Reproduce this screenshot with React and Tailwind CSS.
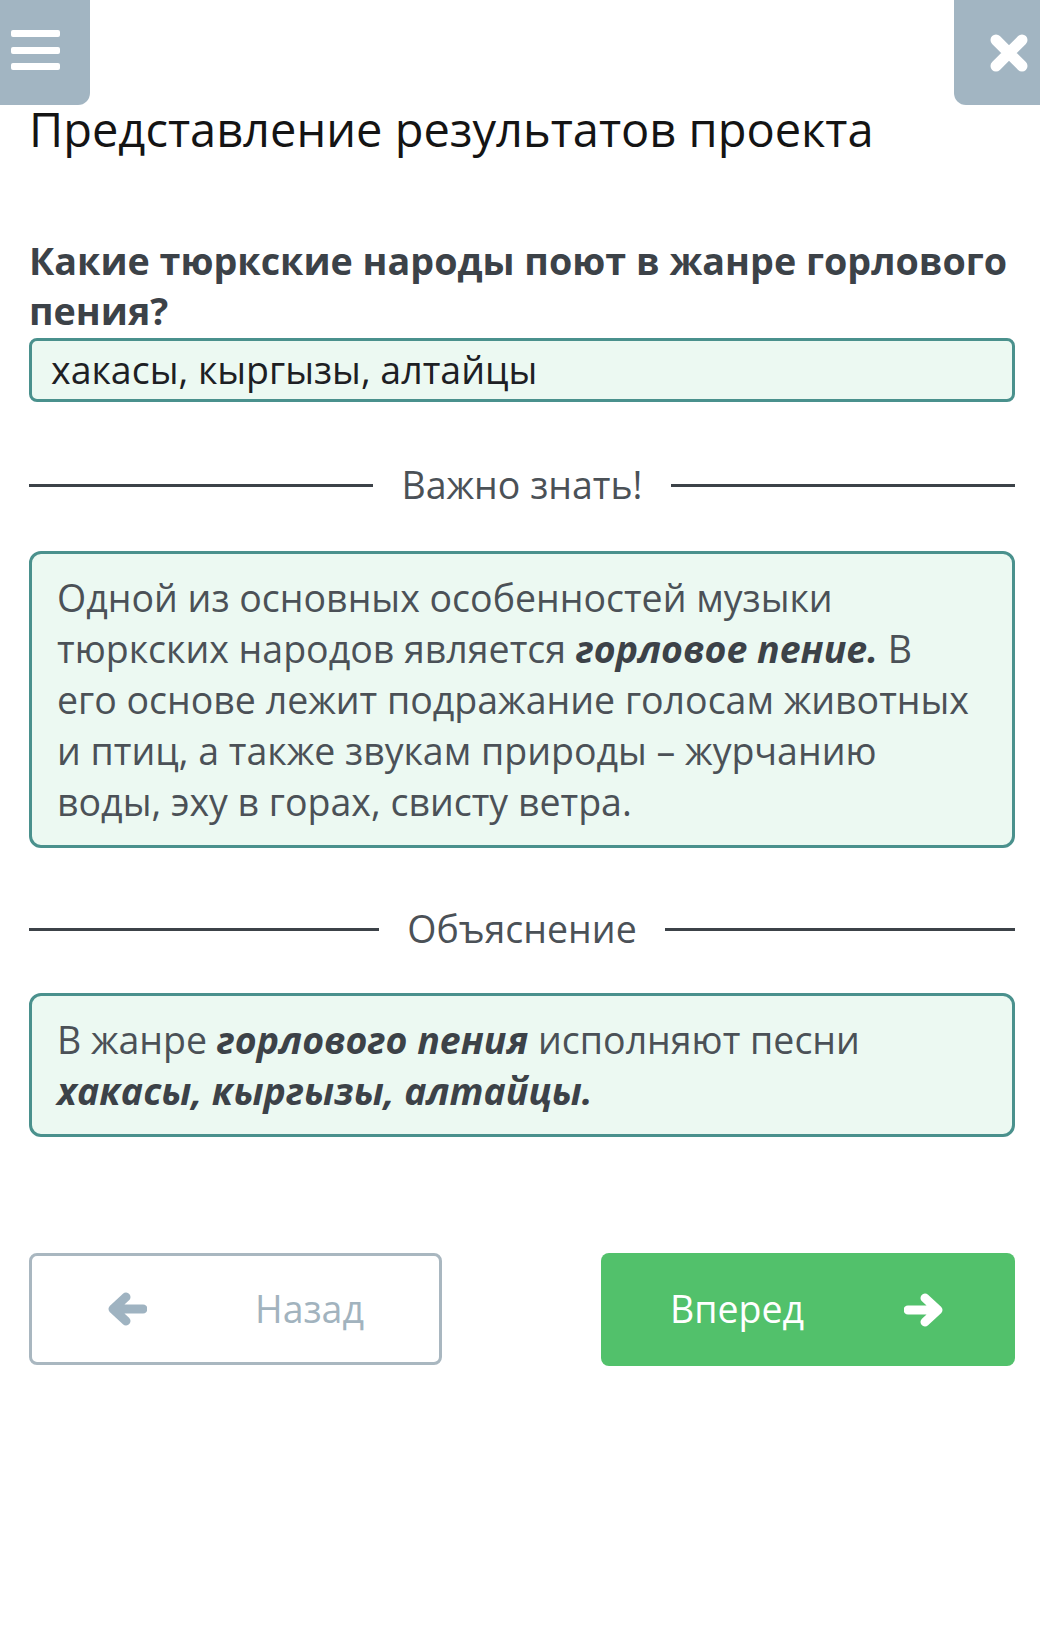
// Quiz explanation screen — question, answer, notes and navigation.

import React from "react";

function Divider({ label }) {
  return (
    <div className="flex items-center">
      <div className="h-[3px] flex-1 bg-[#3c4248]" />
      <span className="px-[28px] text-[37.5px] leading-[52px] text-[#4b5157]">{label}</span>
      <div className="h-[3px] flex-1 bg-[#3c4248]" />
    </div>
  );
}

function Card({ children, className = "" }) {
  return (
    <div className={`rounded-[12px] border-[3px] border-[#4a918d] bg-[#ecf9f2] pl-[25px] pr-[6px] pt-[18px] pb-[18px] ${className}`}>
      {children}
    </div>
  );
}

export default function App() {
  return (
    <div className="relative min-h-[1627px] w-[1040px] bg-white text-[#3c4248]" style={{ fontFamily: '"Open Sans", "Noto Sans", sans-serif' }}>
      {/* top buttons */}
      <button className="absolute left-0 top-0 flex h-[105px] w-[90px] flex-col items-start gap-[9.5px] rounded-br-[12px] bg-[#a2b5c2] pl-[11px] pt-[30px]">
        <span className="block h-[7px] w-[49px] rounded-[2px] bg-white" />
        <span className="block h-[7px] w-[49px] rounded-[2px] bg-white" />
        <span className="block h-[7px] w-[49px] rounded-[2px] bg-white" />
      </button>
      <button className="absolute right-0 top-0 flex h-[105px] w-[86px] items-center justify-center rounded-bl-[12px] bg-[#a2b5c2] pl-[24px]">
        <svg width="40" height="40" viewBox="0 0 40 40">
          <path d="M7 7 L33 33 M33 7 L7 33" stroke="white" strokeWidth="11" strokeLinecap="round" />
        </svg>
      </button>

      <div className="pl-[29px] pr-[25px]">
        <h1 className="pt-[97px] text-[47px] leading-[64px] text-[#141414]">Представление результатов проекта</h1>

        <p className="mt-[75px] text-[37.7px] font-bold leading-[50px] text-[#3c4248]">
          Какие тюркские народы поют в жанре горлового
          <br />
          пения?
        </p>

        <div className="mt-[2px] flex h-[64px] items-center rounded-[8px] border-[3px] border-[#4a918d] bg-[#ecf9f2] px-[19px] text-[37.5px] text-[#1d2024]">
          хакасы, кыргызы, алтайцы
        </div>

        <div className="mt-[57px]">
          <Divider label="Важно знать!" />
        </div>

        <Card className="mt-[40px]">
          <p className="whitespace-nowrap text-[37.5px] leading-[51px] text-[#4b5157]">
            Одной из основных особенностей музыки
            <br />
            тюркских народов является{" "}
            <b className="font-bold italic text-[#3c4248]">горловое пение.</b> В
            <br />
            его основе лежит подражание голосам животных
            <br />
            и птиц, а также звукам природы – журчанию
            <br />
            воды, эху в горах, свисту ветра.
          </p>
        </Card>

        <div className="mt-[55px]">
          <Divider label="Объяснение" />
        </div>

        <Card className="mt-[38px]">
          <p className="whitespace-nowrap text-[37.5px] leading-[51px] text-[#4b5157]">
            В жанре <b className="font-bold italic text-[#3c4248]">горлового пения</b> исполняют песни
            <br />
            <b className="font-bold italic text-[#3c4248]">хакасы, кыргызы, алтайцы.</b>
          </p>
        </Card>

        <div className="mt-[116px] flex justify-between">
          <button className="flex h-[112px] w-[413px] items-center rounded-[8px] border-[3px] border-[#a9b7c0] bg-white pl-[75px] text-[37.5px] text-[#a2b3be]">
            <svg width="40" height="34" viewBox="0 0 40 34">
              <path d="M36 17 H8 M19 5 L6 17 L19 29" fill="none" stroke="#9fb3c1" strokeWidth="9" strokeLinecap="round" strokeLinejoin="round" />
            </svg>
            <span className="ml-[108px]">Назад</span>
          </button>
          <button className="flex h-[113px] w-[414px] items-center rounded-[8px] bg-[#52c16b] pl-[69px] text-[37.5px] text-white">
            <span>Вперед</span>
            <svg className="ml-[100px]" width="40" height="34" viewBox="0 0 40 34">
              <path d="M4 17 H32 M21 5 L34 17 L21 29" fill="none" stroke="white" strokeWidth="9" strokeLinecap="round" strokeLinejoin="round" />
            </svg>
          </button>
        </div>
      </div>
    </div>
  );
}
